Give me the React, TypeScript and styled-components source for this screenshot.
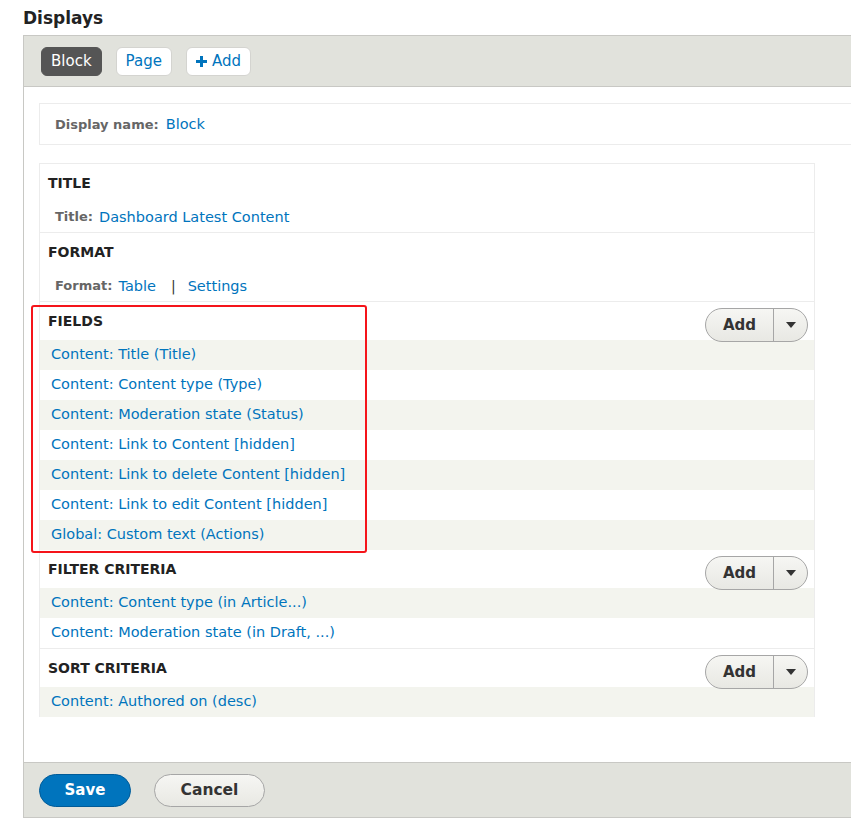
import styled, { createGlobalStyle } from "styled-components";

const GlobalStyle = createGlobalStyle`
  html, body {
    margin: 0;
    padding: 0;
    overflow: hidden;
    background: #ffffff;
    font-family: "DejaVu Sans", Verdana, sans-serif;
  }
`;

type Field = { label: string };

const fields: Field[] = [
  { label: "Content: Title (Title)" },
  { label: "Content: Content type (Type)" },
  { label: "Content: Moderation state (Status)" },
  { label: "Content: Link to Content [hidden]" },
  { label: "Content: Link to delete Content [hidden]" },
  { label: "Content: Link to edit Content [hidden]" },
  { label: "Global: Custom text (Actions)" },
];

const filters: Field[] = [
  { label: "Content: Content type (in Article...)" },
  { label: "Content: Moderation state (in Draft, ...)" },
];

const sorts: Field[] = [{ label: "Content: Authored on (desc)" }];

function AddDropButton() {
  return (
    <DropButton>
      <DropMain>Add</DropMain>
      <DropToggle>
        <svg width="10" height="6" viewBox="0 0 10 6">
          <path d="M0 0h10L5 6z" fill="#333" />
        </svg>
      </DropToggle>
    </DropButton>
  );
}

function FieldRows({ items }: { items: Field[] }) {
  return (
    <>
      {items.map((f, i) => (
        <Row key={f.label} $striped={i % 2 === 0}>
          <Link>{f.label}</Link>
        </Row>
      ))}
    </>
  );
}

export default function App() {
  return (
    <>
      <GlobalStyle />
      <Page>
        <Heading>Displays</Heading>
        <Panel>
          <Toolbar>
            <Tab $active>Block</Tab>
            <Tab>Page</Tab>
            <Tab>
              <svg width="11" height="11" viewBox="0 0 11 11">
                <path d="M4 0h3v4h4v3H7v4H4V7H0V4h4z" fill="#0074bd" />
              </svg>
              Add
            </Tab>
          </Toolbar>
          <Body>
            <DisplayName>
              <Label>Display name:</Label>
              <Link>Block</Link>
            </DisplayName>
            <Columns>
              <Section>
                <SectionHeader>
                  <SectionTitle>TITLE</SectionTitle>
                </SectionHeader>
                <ValueRow>
                  <Label>Title:</Label>
                  <Link>Dashboard Latest Content</Link>
                </ValueRow>
              </Section>
              <Section>
                <SectionHeader>
                  <SectionTitle>FORMAT</SectionTitle>
                </SectionHeader>
                <ValueRow>
                  <Label>Format:</Label>
                  <Link>Table</Link>
                  <Pipe>|</Pipe>
                  <Link>Settings</Link>
                </ValueRow>
              </Section>
              <Section $plain>
                <Highlight />
                <SectionHeader>
                  <SectionTitle>FIELDS</SectionTitle>
                  <AddDropButton />
                </SectionHeader>
                <FieldRows items={fields} />
              </Section>
              <Section>
                <SectionHeader>
                  <SectionTitle>FILTER CRITERIA</SectionTitle>
                  <AddDropButton />
                </SectionHeader>
                <FieldRows items={filters} />
              </Section>
              <Section $plain>
                <SectionHeader>
                  <SectionTitle>SORT CRITERIA</SectionTitle>
                  <AddDropButton />
                </SectionHeader>
                <FieldRows items={sorts} />
              </Section>
            </Columns>
          </Body>
          <Footer>
            <SaveButton>Save</SaveButton>
            <CancelButton>Cancel</CancelButton>
          </Footer>
        </Panel>
      </Page>
    </>
  );
}

const Page = styled.div`
  padding-left: 23px;
  width: 900px;
`;

const Heading = styled.h2`
  margin: 0;
  padding: 6px 0 5px;
  font-size: 17px;
  line-height: 24px;
  font-weight: 700;
  color: #222;
`;

const Panel = styled.div`
  border-left: 1px solid #c8c8c4;
  border-top: 1px solid #c8c8c4;
  border-bottom: 1px solid #c8c8c4;
`;

const Toolbar = styled.div`
  height: 50px;
  background: #e1e2dc;
  border-bottom: 1px solid #c8c8c4;
  display: flex;
  align-items: center;
  gap: 14px;
  padding-left: 17px;
`;

const Tab = styled.div<{ $active?: boolean }>`
  height: 29px;
  box-sizing: border-box;
  padding: 0 9px;
  display: flex;
  align-items: center;
  gap: 5px;
  border-radius: 6px;
  font-size: 15px;
  background: ${(p) => (p.$active ? "#555555" : "#ffffff")};
  color: ${(p) => (p.$active ? "#ffffff" : "#0074bd")};
  border: 1px solid ${(p) => (p.$active ? "#555555" : "#d4d4d0")};
`;

const Body = styled.div`
  padding: 16px 0 45px 15px;
`;

const DisplayName = styled.div`
  height: 42px;
  box-sizing: border-box;
  border: 1px solid #ececec;
  border-right: none;
  padding-left: 15px;
  display: flex;
  align-items: center;
  gap: 7px;
  margin-bottom: 18px;
`;

const Label = styled.span`
  font-size: 13px;
  font-weight: 700;
  color: #666;
`;

const Link = styled.span`
  font-size: 14.5px;
  color: #0074bd;
`;

const Pipe = styled.span`
  font-size: 14px;
  color: #333;
  margin: 0 6px 0 9px;
`;

const Columns = styled.div`
  width: 776px;
  box-sizing: border-box;
  border: 1px solid #ececec;
  border-bottom: none;
`;

const Section = styled.div<{ $plain?: boolean }>`
  position: relative;
  border-bottom: ${(p) => (p.$plain ? "none" : "1px solid #ececec")};
`;

const SectionHeader = styled.div`
  height: 38px;
  display: flex;
  align-items: center;
  justify-content: space-between;
  padding: 0 6px 0 8px;
`;

const SectionTitle = styled.span`
  font-size: 14px;
  font-weight: 700;
  color: #222;
`;

const ValueRow = styled.div`
  height: 30px;
  display: flex;
  align-items: center;
  gap: 6px;
  padding: 0 0 1px 15px;
  box-sizing: border-box;
`;

const Row = styled.div<{ $striped: boolean }>`
  height: 30px;
  box-sizing: border-box;
  display: flex;
  align-items: center;
  padding: 0 0 3px 11px;
  background: ${(p) => (p.$striped ? "#f3f4ee" : "#ffffff")};
`;

const Highlight = styled.div`
  position: absolute;
  left: -9px;
  top: 3px;
  width: 336px;
  height: 248px;
  box-sizing: border-box;
  border: 2px solid #f5141a;
  border-radius: 3px;
  pointer-events: none;
  z-index: 1;
`;

const DropButton = styled.div`
  align-self: flex-start;
  margin-top: 6px;
  display: flex;
  height: 34px;
  box-sizing: border-box;
  border: 1px solid #a6a6a6;
  border-radius: 17px;
  background: linear-gradient(#f6f6f3, #e8e8e3);
  overflow: hidden;
`;

const DropMain = styled.div`
  width: 67px;
  display: flex;
  align-items: center;
  justify-content: center;
  font-size: 15px;
  font-weight: 600;
  color: #333;
  border-right: 1px solid #a6a6a6;
`;

const DropToggle = styled.div`
  width: 33px;
  display: flex;
  align-items: center;
  justify-content: center;
`;

const Footer = styled.div`
  height: 54px;
  background: #e1e2dc;
  border-top: 1px solid #c8c8c4;
  display: flex;
  align-items: center;
  gap: 23px;
  padding-left: 15px;
`;

const SaveButton = styled.div`
  width: 92px;
  height: 33px;
  box-sizing: border-box;
  border-radius: 17px;
  background: #0074bd;
  border: 1px solid #005b98;
  color: #fff;
  font-size: 15px;
  font-weight: 700;
  display: flex;
  align-items: center;
  justify-content: center;
`;

const CancelButton = styled.div`
  width: 111px;
  height: 33px;
  box-sizing: border-box;
  border-radius: 17px;
  background: linear-gradient(#f6f6f3, #e8e8e3);
  border: 1px solid #a6a6a6;
  color: #333;
  font-size: 15.5px;
  font-weight: 600;
  display: flex;
  align-items: center;
  justify-content: center;
`;
